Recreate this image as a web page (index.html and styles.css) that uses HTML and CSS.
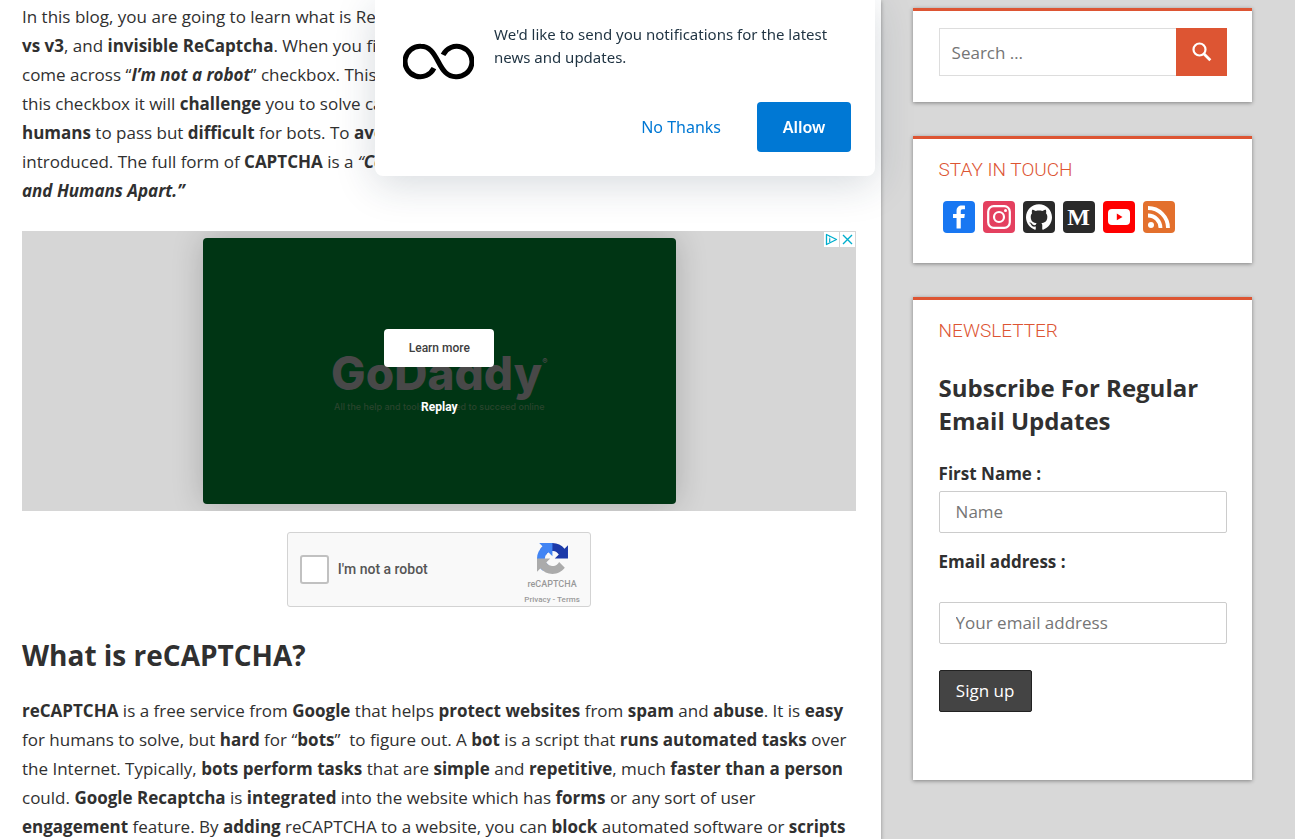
FILE: index.html
```html
<!DOCTYPE html>
<html lang="en">
<head>
<meta charset="utf-8">
<meta name="viewport" content="width=device-width, initial-scale=1">
<title>What is reCAPTCHA?</title>
<link rel="stylesheet" href="styles.css">
</head>
<body>
<div class="page">
  <main class="content">
    <p class="text">In this blog, you are going to learn what is ReCaptcha<br>
      <strong>vs v3</strong>, and <strong>invisible ReCaptcha</strong>. When you fill<br>
      come across “<strong><em>I’m not a robot</em></strong>” checkbox. This<br>
      this checkbox it will <strong>challenge</strong> you to solve captcha<br>
      <strong>humans</strong> to pass but <strong>difficult</strong> for bots. To <strong>avoid</strong><br>
      introduced. The full form of <strong>CAPTCHA</strong> is a <em>“<strong>Completely</strong></em><br>
      <strong><em>and Humans Apart.”</em></strong></p>

    <section class="ad" aria-label="Advertisement">
      <div class="ad-card">
        <div class="ad-brand">
          <div class="ad-name">GoDaddy<sup class="ad-mark">®</sup></div>
          <div class="ad-tagline">All the help and tools you need to succeed online</div>
        </div>
        <div class="ad-actions">
          <button class="ad-learn" type="button">Learn more</button>
          <button class="ad-replay" type="button">Replay</button>
        </div>
      </div>
      <div class="ad-tools">
        <button class="ad-tool" type="button" aria-label="Ad choices">
          <svg viewBox="0 0 15 15" fill="none" stroke="#00aecd"><path d="M2.500 2.500v10l10-5z" stroke-width="1.300" stroke-linejoin="round"/><path d="M5.700 6.200v4M5.700 4.200v1" stroke-width="1.200"/></svg>
        </button>
        <button class="ad-tool" type="button" aria-label="Close ad">
          <svg viewBox="0 0 15 15" fill="none" stroke="#00aecd" stroke-width="1.400"><path d="M3 3l9 9M12 3l-9 9"/></svg>
        </button>
      </div>
    </section>

    <div class="captcha">
      <label class="captcha-label"><input class="captcha-box" type="checkbox">I'm not a robot</label>
      <div class="captcha-brand">
        <svg class="captcha-logo" viewBox="0 0 64 64"><path fill="#1c3aa9" d="M64 31.955l-.033-1.370V4.687l-7.160 7.160C50.948 4.674 42.033.093 32.050.093c-10.400 0-19.622 4.960-25.458 12.640l11.736 11.860a15.550 15.550 0 0 1 4.754-5.334c2.050-1.600 4.952-2.906 8.968-2.906.485 0 .86.057 1.135.163 4.976.393 9.288 3.140 11.828 7.124l-8.307 8.307L64 31.953"/><path fill="#4285f4" d="M31.862.094l-1.370.033H4.594l7.160 7.160C4.580 13.147 0 22.060 0 32.046c0 10.400 4.960 19.622 12.640 25.458L24.500 45.768a15.550 15.550 0 0 1-5.334-4.754c-1.600-2.050-2.906-4.952-2.906-8.968 0-.485.057-.86.163-1.135.393-4.976 3.140-9.288 7.124-11.828l8.307 8.307L31.860.095"/><path fill="#ababab" d="M.001 32.045l.033 1.370v25.898l7.160-7.160c5.860 7.173 14.774 11.754 24.760 11.754 10.400 0 19.622-4.960 25.458-12.640l-11.736-11.860a15.550 15.550 0 0 1-4.754 5.334c-2.050 1.600-4.952 2.906-8.968 2.906-.485 0-.86-.057-1.135-.163-4.976-.393-9.288-3.140-11.828-7.124l8.307-8.307c-10.522.040-22.400.066-27.295-.005"/></svg>
        <span class="captcha-name">reCAPTCHA</span>
        <span class="captcha-links"><a href="#privacy">Privacy</a> - <a href="#terms">Terms</a></span>
      </div>
    </div>

    <h2 class="heading">What is reCAPTCHA?</h2>
    <p class="text"><strong>reCAPTCHA</strong> is a free service from <strong>Google</strong> that helps <strong>protect websites</strong> from <strong>spam</strong> and <strong>abuse</strong>. It is <strong>easy</strong> for humans to solve, but <strong>hard</strong> for “<strong>bots</strong>”&nbsp; to figure out. A <strong>bot</strong> is a script that <strong>runs automated tasks</strong> over the Internet. Typically, <strong>bots perform tasks</strong> that are <strong>simple</strong> and <strong>repetitive</strong>, much <strong>faster than a person</strong> could. <strong>Google Recaptcha</strong> is <strong>integrated</strong> into the website which has <strong>forms</strong> or any sort of user <strong>engagement</strong> feature. By <strong>adding</strong> reCAPTCHA to a website, you can <strong>block</strong> automated software or <strong>scripts</strong></p>
  </main>

  <aside class="sidebar">
    <section class="widget">
      <form class="search">
        <input class="search-input" type="search" placeholder="Search …" aria-label="Search">
        <button class="search-button" type="submit" aria-label="Search">
          <svg viewBox="0 0 20 20" fill="none" stroke="#fff"><circle cx="7.500" cy="7.500" r="6" stroke-width="2.200"/><path d="M11.800 11.800l6.500 6.500" stroke-width="2.800"/></svg>
        </button>
      </form>
    </section>

    <section class="widget widget-social">
      <h3 class="widget-title">STAY IN TOUCH</h3>
      <div class="social">
        <a class="social-link facebook" href="#facebook" aria-label="Facebook"><svg viewBox="0 0 32 32"><path fill="#fff" d="M17.780 27.500V17.008h3.522l.527-4.090h-4.050v-2.610c0-1.182.33-1.990 2.023-1.990h2.166V4.660c-.375-.05-1.660-.16-3.155-.16-3.123 0-5.260 1.905-5.260 5.405v3.016h-3.530v4.090h3.530V27.500h4.223z"/></svg></a>
        <a class="social-link instagram" href="#instagram" aria-label="Instagram"><svg viewBox="0 0 32 32" fill="none" stroke="#fff" stroke-width="2.200"><rect x="5.200" y="5.200" width="21.600" height="21.600" rx="5.500"/><circle cx="16" cy="16" r="5"/><circle cx="22.500" cy="9.500" r="1.500" fill="#fff" stroke="none"/></svg></a>
        <a class="social-link github" href="#github" aria-label="GitHub"><svg viewBox="0 0 32 32"><path fill="#fff" d="M16 3.320c-7.182 0-13 5.820-13 13 0 5.754 3.720 10.612 8.890 12.335.65.114.893-.276.893-.617 0-.31-.016-1.333-.016-2.420-3.266.6-4.110-.797-4.370-1.530-.147-.373-.78-1.527-1.334-1.835-.455-.244-1.105-.845-.016-.86 1.024-.017 1.755.942 2 1.332 1.170 1.966 3.038 1.414 3.785 1.073.114-.845.455-1.414.83-1.740-2.893-.324-5.916-1.445-5.916-6.418 0-1.414.504-2.584 1.333-3.494-.13-.325-.59-1.657.13-3.445 0 0 1.085-.34 3.570 1.337 1.040-.293 2.146-.44 3.250-.44s2.210.147 3.250.44c2.490-1.690 3.580-1.337 3.580-1.337.714 1.790.26 3.120.13 3.446.828.91 1.332 2.064 1.332 3.494 0 4.990-3.040 6.094-5.930 6.420.47.405.876 1.185.876 2.404 0 1.740-.016 3.136-.016 3.575 0 .34.244.743.894.613C25.280 26.933 29 22.053 29 16.320c0-7.182-5.817-13-13-13z"/></svg></a>
        <a class="social-link medium" href="#medium" aria-label="Medium">M</a>
        <a class="social-link youtube" href="#youtube" aria-label="YouTube"><svg viewBox="0 0 32 32"><rect x="5" y="8" width="22" height="16" rx="4" fill="#fff"/><path fill="#f00" d="M13.800 12.600v6.600l5.700-3.300z"/></svg></a>
        <a class="social-link rss" href="#feed" aria-label="RSS feed"><svg viewBox="0 0 32 32" fill="none" stroke="#fff" stroke-width="3.800"><circle cx="8" cy="24" r="3" fill="#fff" stroke="none"/><path d="M5 14.500A12.500 12.500 0 0 1 17.500 27M5 7a20 20 0 0 1 20 20"/></svg></a>
      </div>
    </section>

    <section class="widget widget-news">
      <h3 class="widget-title">NEWSLETTER</h3>
      <h4 class="subscribe">Subscribe For Regular Email Updates</h4>
      <form class="signup">
        <label class="field-label" for="name">First Name :</label>
        <input class="field" id="name" type="text" placeholder="Name">
        <label class="field-label email-label" for="email">Email address :</label>
        <input class="field" id="email" type="email" placeholder="Your email address">
        <button class="signup-button" type="submit">Sign up</button>
      </form>
    </section>
  </aside>
</div>

<div class="notice" role="dialog" aria-label="Notifications">
  <div class="notice-body">
    <svg class="notice-logo" viewBox="0 0 70 36" fill="none" stroke="#000" stroke-width="5"><path d="M30.500 24.500A15 15 0 1 1 17.500 3C26 3 30 9 34.700 18S43.500 33 52 33A15 15 0 1 0 39.500 11.500"/></svg>
    <p class="notice-text">We'd like to send you notifications for the latest news and updates.</p>
  </div>
  <div class="notice-actions">
    <button class="notice-deny" type="button">No Thanks</button>
    <button class="notice-allow" type="button">Allow</button>
  </div>
</div>
</body>
</html>
```

FILE: styles.css
```css
* { box-sizing: border-box; }

body {
  margin: 0;
  height: 100vh;
  overflow-y: auto;
  scrollbar-width: none;
  background: #d8d8d8;
  color: #303030;
  font: 17px/29px "Open Sans", sans-serif;
}

button, input { font-family: inherit; }

.page { display: flex; align-items: stretch; min-height: 100%; }

.content {
  flex: 0 0 68%;
  padding: 2px 25px 0 22px;
  background: #fff;
  box-shadow: 0 1px 4px rgba(0, 0, 0, .35);
}

.text { margin: 0; font-weight: 400; }
.text strong { font-weight: 700; }

.ad {
  position: relative;
  display: flex;
  justify-content: center;
  margin-top: 26px;
  padding: 7px 6px 7px 7px;
  background: #d6d6d6;
  overflow: hidden;
}
.ad-card {
  display: grid;
  place-items: center;
  width: 473px;
  height: 266px;
  border-radius: 4px;
  background: #003514;
  box-shadow: 0 0 32px rgba(0, 0, 0, .2);
  font-family: Roboto, sans-serif;
}
.ad-brand, .ad-actions { grid-area: 1 / 1; }
.ad-brand { padding-top: 16px; color: #484848; text-align: center; }
.ad-name { display: flex; justify-content: center; font: 800 46px/56px Inter, sans-serif; }
.ad-mark { font-size: 8px; line-height: 32px; }
.ad-tagline { font: 500 9px/12px Inter, sans-serif; color: #2a442e; }
.ad-actions { display: flex; flex-direction: column; align-items: center; gap: 30px; padding-top: 4px; }
.ad-learn {
  width: 110px;
  height: 38px;
  border: 0;
  border-radius: 4px;
  background: #fff;
  color: #404040;
  font: 500 12px/16px Roboto, sans-serif;
}
.ad-replay { padding: 0; border: 0; background: none; color: #fff; font: 700 12px/20px Roboto, sans-serif; }
.ad-tools { position: absolute; top: 1px; right: 1px; display: flex; gap: 1px; }
.ad-tool { display: flex; width: 15px; height: 15px; padding: 0; border: 0; background: #fff; }

.captcha {
  display: flex;
  justify-content: space-between;
  width: 304px;
  height: 75px;
  margin: 21px auto 0;
  padding: 0 10px 0 12px;
  border: 1px solid #d3d3d3;
  border-radius: 3px;
  background: #f9f9f9;
  font-family: Roboto, sans-serif;
}
.captcha-label { display: flex; align-items: center; gap: 9px; font-size: 14px; font-weight: 500; color: #555; }
.captcha-box {
  appearance: none;
  width: 29px;
  height: 29px;
  margin: 0;
  border: 2px solid #c1c1c1;
  border-radius: 3px;
  background: #fff;
}
.captcha-brand { display: flex; flex-direction: column; align-items: center; padding-top: 10px; color: #999; }
.captcha-logo { width: 31px; height: 31px; }
.captcha-name { font-size: 9px; line-height: 20px; font-weight: 500; }
.captcha-links { font-size: 8px; line-height: 12px; font-weight: 500; }
.captcha-links a { color: inherit; text-decoration: none; }

.heading { margin: 29px 0 22px; font-size: 28px; line-height: 38px; font-weight: 700; }

.sidebar {
  flex: 1;
  display: flex;
  flex-direction: column;
  gap: 34px;
  min-width: 0;
  padding: 8px 43px 0 32px;
}
.widget {
  padding: 17px 25px 26px 26px;
  border-top: 3px solid #dd5533;
  background: #fff;
  box-shadow: 0 1px 4px rgba(0, 0, 0, .4);
}
.widget-title {
  margin: 0;
  color: #dd5533;
  font: 300 19px/28px Roboto, sans-serif;
}

.search { display: flex; }
.search-input {
  flex: 1;
  min-width: 0;
  height: 48px;
  padding: 0 12px;
  border: 1px solid #ddd;
  border-right: 0;
  border-radius: 0;
  font-size: 17px;
}
.search-button {
  display: grid;
  place-items: center;
  width: 51px;
  height: 48px;
  padding: 0;
  border: 0;
  background: #dd5533;
}
.search-button svg { width: 20px; height: 20px; }
::placeholder { color: #757575; opacity: 1; }

.widget-social { padding-bottom: 30px; }
.social { display: flex; gap: 8px; padding: 17px 4px 0; }
.social-link {
  width: 32px;
  height: 32px;
  border-radius: 4px;
  color: #fff;
  text-align: center;
  text-decoration: none;
}
.social-link svg { display: block; }
.facebook { background: #1877f2; }
.instagram { background: #e4405f; }
.github, .medium { background: #2a2a2a; }
.medium { font: 700 24px/32px "Liberation Serif", serif; }
.youtube { background: #f00; }
.rss { background: #e3702d; }

.widget-news { padding-bottom: 68px; }
.subscribe { margin: 26px 0 25px; font-size: 24px; line-height: 33px; font-weight: 700; }
.signup { display: flex; flex-direction: column; align-items: flex-start; }
.field-label { font-weight: 700; line-height: 24px; padding-bottom: 5px; }
.field {
  width: 100%;
  height: 42px;
  padding: 0 16px 1px;
  border: 1px solid #ccc;
  border-radius: 2px;
  font-size: 17px;
}
.email-label { padding: 17px 0 28px; }
.signup-button {
  width: 93px;
  height: 42px;
  margin-top: 26px;
  padding: 0 0 2px;
  border: 1px solid #222;
  border-radius: 2px;
  background: #444;
  color: #fff;
  font-size: 17px;
}

.notice {
  position: fixed;
  top: 0;
  left: 375px;
  width: 500px;
  padding: 23px 24px 24px 28px;
  border-radius: 0 0 8px 8px;
  background: #fff;
  color: #1f3342;
  box-shadow: 0 8px 40px rgba(30, 50, 70, .18);
  font-family: "Noto Sans", sans-serif;
}
.notice-body { display: flex; align-items: flex-start; gap: 20px; }
.notice-logo { flex: none; width: 71px; height: 37px; margin-top: 20px; }
.notice-text { margin: 0; font-size: 15px; line-height: 23px; font-weight: 400; }
.notice-actions { display: flex; justify-content: flex-end; gap: 36px; margin-top: 22px; }
.notice-deny { padding: 0; border: 0; background: none; color: #0078d4; font-size: 16px; font-weight: 400; }
.notice-allow {
  width: 94px;
  height: 50px;
  border: 0;
  border-radius: 4px;
  background: #0078d4;
  color: #fff;
  font-size: 16px;
  font-weight: 600;
}
```
